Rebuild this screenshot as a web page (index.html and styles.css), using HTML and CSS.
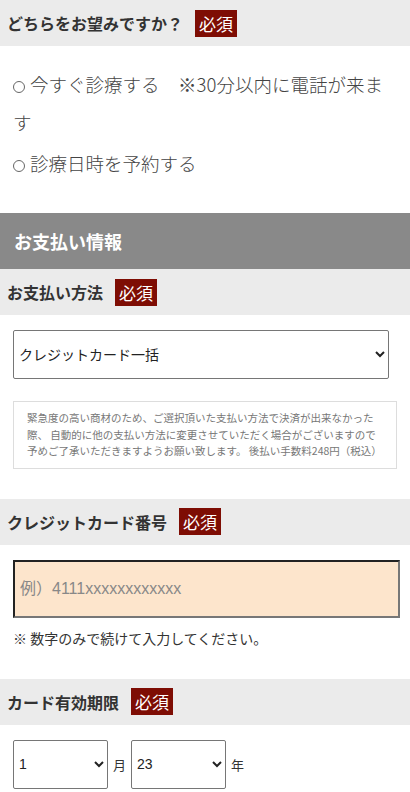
FILE: index.html
```html
<!DOCTYPE html>
<html lang="ja">
<head>
	<meta charset="utf-8">
	<title>ご予約フォーム</title>
	<link rel="stylesheet" href="styles.css">
</head>
<body>
	<div class="form">
		<div class="q-head">
			<h3>どちらをお望みですか？</h3>
			<span class="req">必須</span>
		</div>
		<div class="choices">
			<label class="choice"><input type="radio" name="when"> 今すぐ診療する　※30分以内に電話が来ます</label>
			<label class="choice"><input type="radio" name="when"> 診療日時を予約する</label>
		</div>

		<div class="sec-head">お支払い情報</div>

		<div class="q-head">
			<h3>お支払い方法</h3>
			<span class="req">必須</span>
		</div>
		<div class="field">
			<select class="sel sel-wide">
				<option>クレジットカード一括</option>
			</select>
			<p class="notice">緊急度の高い商材のため、ご選択頂いた支払い方法で決済が出来なかった際、 自動的に他の支払い方法に変更させていただく場合がございますので予めご了承いただきますようお願い致します。 後払い手数料248円（税込）</p>
		</div>

		<div class="q-head">
			<h3>クレジットカード番号</h3>
			<span class="req">必須</span>
		</div>
		<div class="field">
			<input class="card" type="text" placeholder="例）4111xxxxxxxxxxxx">
			<p class="hint">※ 数字のみで続けて入力してください。</p>
		</div>

		<div class="q-head">
			<h3>カード有効期限</h3>
			<span class="req">必須</span>
		</div>
		<div class="field expiry">
			<select class="sel sel-small">
				<option>1</option>
				<option>2</option>
				<option>3</option>
			</select>
			<span class="unit">月</span>
			<select class="sel sel-small">
				<option>23</option>
				<option>24</option>
				<option>25</option>
			</select>
			<span class="unit">年</span>
		</div>
	</div>
</body>
</html>
```

FILE: styles.css
```css
body {
	margin: 0;
	font-family: "Noto Sans CJK JP", "Noto Sans", sans-serif;
	color: #333;
	background: #fff;
}

.q-head {
	display: flex;
	align-items: center;
	gap: 12px;
	height: 46px;
	padding: 0 7px;
	background: #ebebeb;
}

.q-head h3 {
	margin: 0;
	font-size: 16px;
	font-weight: 700;
	color: #333;
}

.req {
	display: inline-block;
	padding: 1px 4px;
	background: #7e0d04;
	color: #fff;
	font-size: 17px;
	line-height: 25px;
}

.choices {
	padding: 19px 13px 28px;
}

.choice {
	display: block;
	margin-bottom: 3px;
	font-size: 18.5px;
	line-height: 38px;
	font-weight: 300;
	color: #444;
}

.choice input {
	appearance: none;
	width: 12px;
	height: 12px;
	margin: 0 1px 0 0;
	border: 1px solid #666;
	border-radius: 50%;
	vertical-align: -1px;
}

.sec-head {
	height: 56px;
	padding-left: 14px;
	background: #898989;
	color: #fff;
	font-size: 18px;
	font-weight: 700;
	line-height: 56px;
}

.field {
	padding: 15px 13px 30px;
}

.sel {
	height: 49px;
	border: 1px solid #767676;
	border-radius: 2px;
	background: #fff;
	color: #222;
	font-family: "Liberation Sans", "Noto Sans CJK JP", sans-serif;
	font-size: 14px;
	padding: 0 1px;
}

.sel-wide {
	display: block;
	width: 376px;
}

.notice {
	margin: 22px 0 0;
	padding: 8px 14px 8px 13px;
	border: 1px solid #ddd;
	font-size: 10.5px;
	line-height: 16.5px;
	color: #777;
}

.card {
	display: block;
	box-sizing: border-box;
	width: 387px;
	height: 58px;
	margin: 0;
	padding: 0 5px;
	border: 2px solid;
	border-color: #222 #777 #777 #222;
	background: #fde5cc;
	font-size: 16px;
	font-family: "Liberation Sans", "Noto Sans CJK JP", sans-serif;
}

.card::placeholder {
	color: #888;
}

.hint {
	margin: 9px 0 0;
	font-size: 14px;
	line-height: 22px;
	color: #333;
}

.expiry {
	display: flex;
	align-items: center;
	gap: 5px;
	padding-bottom: 10px;
}

.sel-small {
	width: 95px;
}

.unit {
	font-size: 13px;
}
```
